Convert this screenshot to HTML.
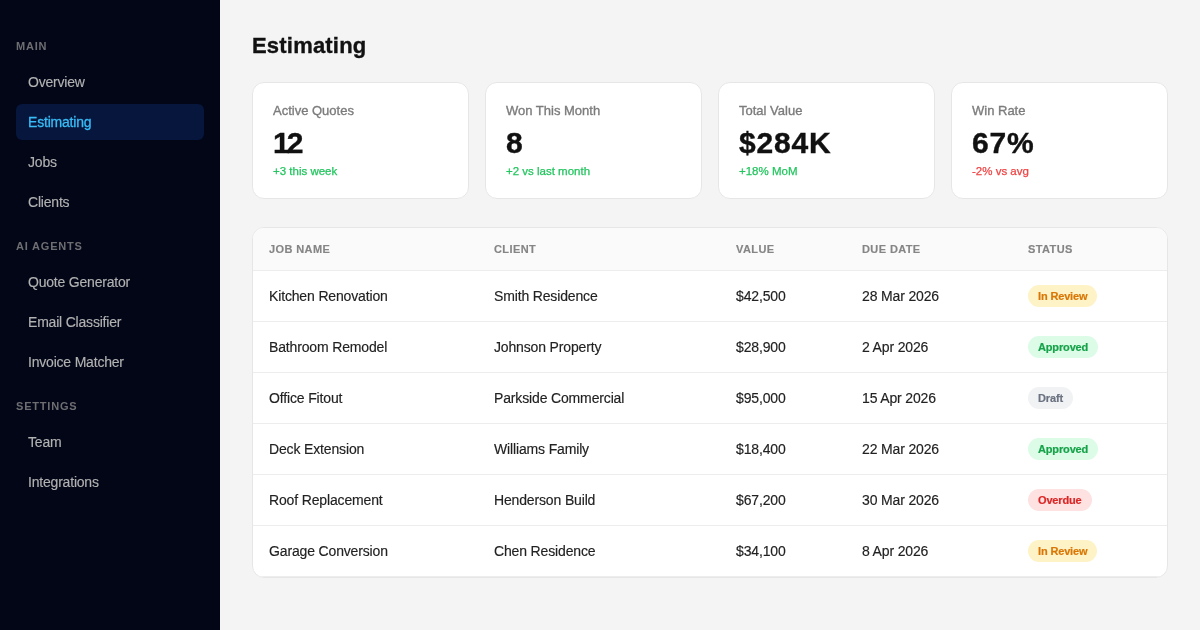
<!DOCTYPE html>
<html>
<head>
<meta charset="utf-8">
<style>
*{margin:0;padding:0;box-sizing:border-box}
html,body{width:1200px;height:630px;overflow:hidden}
body{font-family:"Liberation Sans",sans-serif;background:#f4f4f4;position:relative}
.sb,.card,.tbl,.title{will-change:transform}
.sb{position:absolute;left:0;top:0;width:220px;height:630px;background:#020617}
.lbl{position:absolute;left:16px;height:12px;line-height:12px;font-size:11px;font-weight:bold;letter-spacing:0.8px;color:#6e6e72}
.nav{position:absolute;left:16px;width:188px;height:36px;line-height:36px;padding-left:12px;font-size:14px;letter-spacing:-0.2px;color:#b2b2b2;-webkit-text-stroke:0.15px #b2b2b2;border-radius:6px;white-space:nowrap}
.nav.act{background:#06163c;color:#38bdf8;-webkit-text-stroke:0.3px #38bdf8}
.title{position:absolute;left:252px;top:32px;height:27px;line-height:27px;font-size:22px;letter-spacing:0.2px;-webkit-text-stroke:0.35px #111;font-weight:bold;color:#111}
.card{position:absolute;top:82px;width:217px;height:117px;background:#fff;border:1px solid #e6e6e6;border-radius:12px}
.card .cl{-webkit-text-stroke:0.35px #7c7c7c;position:absolute;left:20px;top:19.5px;height:16px;line-height:16px;font-size:13px;color:#7c7c7c;white-space:nowrap}
.card .cv{-webkit-text-stroke:0.4px #111;position:absolute;left:20px;top:42.5px;height:34px;line-height:34px;font-size:30px;font-weight:bold;color:#111;letter-spacing:0.8px;white-space:nowrap}
.card .cs{-webkit-text-stroke:0.25px #22c55e;position:absolute;left:20px;top:80.7px;height:14px;line-height:14px;font-size:11.5px;color:#22c55e;white-space:nowrap}
.card .cs.neg{color:#ef4444;-webkit-text-stroke:0.25px #ef4444}
.tbl{position:absolute;left:252px;top:227px;width:916px;height:351px;background:#fff;border:1px solid #e6e6e6;border-radius:12px;overflow:hidden}
.row{display:grid;grid-template-columns:225px 242px 126px 166px 155px;height:51px;border-bottom:1px solid #ededed}
.row>div{padding-left:16px;line-height:51px;font-size:14px;letter-spacing:-0.15px;color:#222;-webkit-text-stroke:0.15px #222;white-space:nowrap}
.hd{height:43px;background:#fafafa}
.hd>div{line-height:42px;font-size:11px;font-weight:bold;letter-spacing:0.4px;color:#858585;-webkit-text-stroke:0.15px #858585}
.bdg{-webkit-text-stroke-width:0.2px;-webkit-text-stroke-color:currentColor;display:inline-block;height:22px;line-height:22px;padding:0 10px;border-radius:11px;font-size:11px;font-weight:bold;vertical-align:middle;position:relative;top:-1px}
.rv{background:#fef3c7;color:#d97706}
.ap{background:#dcfce7;color:#16a34a}
.dr{background:#f1f2f4;color:#6b7280}
.od{background:#fee2e2;color:#dc2626}
</style>
</head>
<body>
<div class="sb">
  <div class="lbl" style="top:40px">MAIN</div>
  <div class="nav" style="top:64px">Overview</div>
  <div class="nav act" style="top:104px">Estimating</div>
  <div class="nav" style="top:144px">Jobs</div>
  <div class="nav" style="top:184px">Clients</div>
  <div class="lbl" style="top:240px">AI AGENTS</div>
  <div class="nav" style="top:264px">Quote Generator</div>
  <div class="nav" style="top:304px">Email Classifier</div>
  <div class="nav" style="top:344px">Invoice Matcher</div>
  <div class="lbl" style="top:400px">SETTINGS</div>
  <div class="nav" style="top:424px">Team</div>
  <div class="nav" style="top:464px">Integrations</div>
</div>

<div class="title">Estimating</div>

<div class="card" style="left:252px"><div class="cl">Active Quotes</div><div class="cv" style="letter-spacing:-3px">12</div><div class="cs">+3 this week</div></div>
<div class="card" style="left:485px"><div class="cl">Won This Month</div><div class="cv">8</div><div class="cs">+2 vs last month</div></div>
<div class="card" style="left:718px"><div class="cl">Total Value</div><div class="cv">$284K</div><div class="cs">+18% MoM</div></div>
<div class="card" style="left:951px"><div class="cl">Win Rate</div><div class="cv">67%</div><div class="cs neg">-2% vs avg</div></div>

<div class="tbl">
  <div class="row hd"><div>JOB NAME</div><div>CLIENT</div><div>VALUE</div><div>DUE DATE</div><div>STATUS</div></div>
  <div class="row"><div>Kitchen Renovation</div><div>Smith Residence</div><div>$42,500</div><div>28 Mar 2026</div><div><span class="bdg rv">In Review</span></div></div>
  <div class="row"><div>Bathroom Remodel</div><div>Johnson Property</div><div>$28,900</div><div>2 Apr 2026</div><div><span class="bdg ap">Approved</span></div></div>
  <div class="row"><div>Office Fitout</div><div>Parkside Commercial</div><div>$95,000</div><div>15 Apr 2026</div><div><span class="bdg dr">Draft</span></div></div>
  <div class="row"><div>Deck Extension</div><div>Williams Family</div><div>$18,400</div><div>22 Mar 2026</div><div><span class="bdg ap">Approved</span></div></div>
  <div class="row"><div>Roof Replacement</div><div>Henderson Build</div><div>$67,200</div><div>30 Mar 2026</div><div><span class="bdg od">Overdue</span></div></div>
  <div class="row"><div>Garage Conversion</div><div>Chen Residence</div><div>$34,100</div><div>8 Apr 2026</div><div><span class="bdg rv">In Review</span></div></div>
</div>
</body>
</html>
